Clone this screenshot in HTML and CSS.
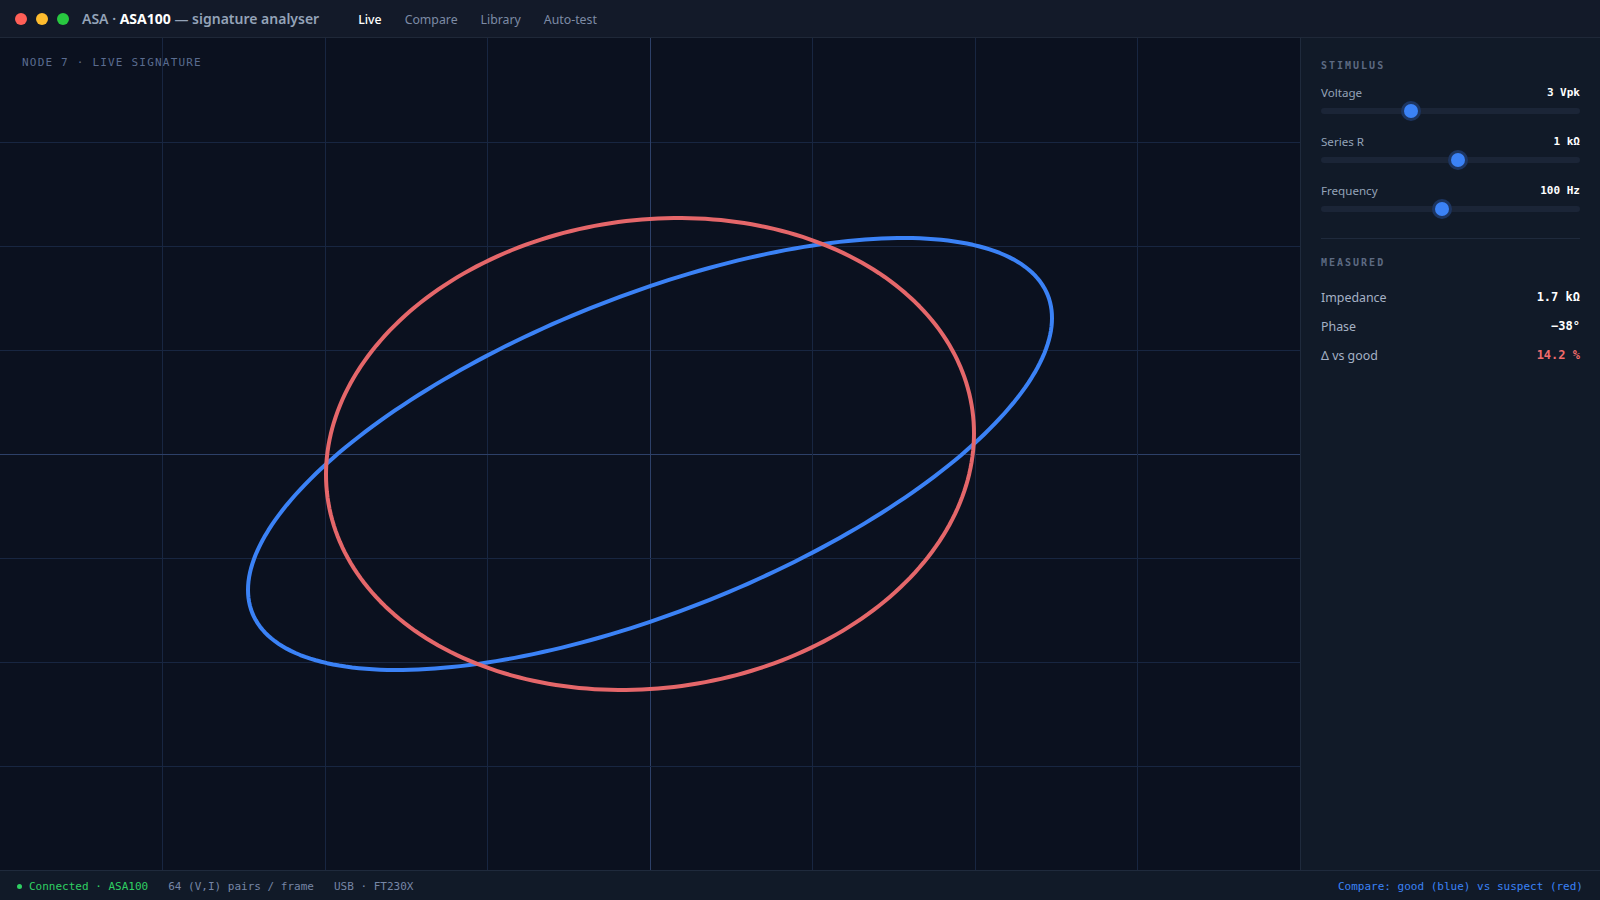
FILE: index.html
```html
<!DOCTYPE html>
<html lang="en">
<head>
  <meta charset="UTF-8">
  <meta name="viewport" content="width=device-width, initial-scale=1.0">
  <title>ASA100 signature analyser</title>
  <link rel="stylesheet" href="styles.css">
</head>
<body>
  <header class="titlebar">
    <div class="lights">
      <span class="light close"></span>
      <span class="light min"></span>
      <span class="light max"></span>
    </div>
    <div class="app-title">ASA · <b>ASA100</b> — signature analyser</div>
    <nav class="tabs">
      <a class="tab active">Live</a>
      <a class="tab">Compare</a>
      <a class="tab">Library</a>
      <a class="tab">Auto-test</a>
    </nav>
  </header>

  <main class="workspace">
    <section class="scope">
      <div class="scope-label">NODE 7 · LIVE SIGNATURE</div>
      <svg id="plot" viewBox="0 0 1300 832" preserveAspectRatio="none">
        <g id="grid" class="grid"></g>
        <path id="trace-good" class="trace good"></path>
        <path id="trace-suspect" class="trace suspect"></path>
      </svg>
    </section>

    <aside class="panel">
      <div class="group stimulus">
        <div class="group-title">STIMULUS</div>
        <div class="control">
          <div class="control-head"><span>Voltage</span><span class="value">3 Vpk</span></div>
          <input type="range" min="0" max="100" value="34">
        </div>
        <div class="control">
          <div class="control-head"><span>Series R</span><span class="value">1 kΩ</span></div>
          <input type="range" min="0" max="100" value="53">
        </div>
        <div class="control">
          <div class="control-head"><span>Frequency</span><span class="value">100 Hz</span></div>
          <input type="range" min="0" max="100" value="46.5" step="0.5">
        </div>
      </div>
      <div class="group measured">
        <div class="group-title">MEASURED</div>
        <div class="reading"><span>Impedance</span><span class="value">1.7 kΩ</span></div>
        <div class="reading"><span>Phase</span><span class="value">−38°</span></div>
        <div class="reading"><span>Δ vs good</span><span class="value bad">14.2 %</span></div>
      </div>
    </aside>
  </main>

  <footer class="statusbar">
    <span class="status ok"><i class="dot"></i>Connected · ASA100</span>
    <span class="status">64 (V,I) pairs / frame</span>
    <span class="status">USB · FT230X</span>
    <span class="status legend">Compare: good (blue) vs suspect (red)</span>
  </footer>

  <script>
    const W = 1300, H = 832;
    const cx = W / 2, cy = H / 2;
    const NS = "http://www.w3.org/2000/svg";

    // 8 x 8 graticule, centre lines brighter
    const grid = document.getElementById("grid");
    for (let i = 1; i < 8; i++) {
      const v = document.createElementNS(NS, "line");
      const x = i * W / 8;
      v.setAttribute("x1", x); v.setAttribute("x2", x);
      v.setAttribute("y1", 0); v.setAttribute("y2", H);
      if (i === 4) v.classList.add("axis");
      grid.appendChild(v);

      const h = document.createElementNS(NS, "line");
      const y = i * H / 8 + 0.5;
      h.setAttribute("x1", 0); h.setAttribute("x2", W);
      h.setAttribute("y1", y); h.setAttribute("y2", y);
      if (i === 4) h.classList.add("axis");
      grid.appendChild(h);
    }

    // V-I signature: x = V, y = I shifted by phase
    function signature(ampV, ampI, phaseDeg, n) {
      const phi = phaseDeg * Math.PI / 180;
      let d = "";
      for (let k = 0; k <= n; k++) {
        const t = k / n * Math.PI * 2;
        const x = cx + ampV * Math.sin(t);
        const y = cy - ampI * Math.sin(t + phi);
        d += (k === 0 ? "M" : "L") + x.toFixed(2) + " " + y.toFixed(2) + " ";
      }
      return d + "Z";
    }

    document.getElementById("trace-good").setAttribute("d", signature(402, 216, 51, 256));
    document.getElementById("trace-suspect").setAttribute("d", signature(324, 236, 85, 256));
  </script>
</body>
</html>
```

FILE: styles.css
```css
* {
  box-sizing: border-box;
}
body {
  margin: 0;
  height: 100vh;
  display: flex;
  flex-direction: column;
  background-color: #0b111e;
  color: #e5e9f0;
  font-family: "Noto Sans", sans-serif;
  overflow: hidden;
}

/* title bar */
.titlebar {
  height: 38px;
  flex: none;
  display: flex;
  align-items: center;
  padding-left: 15px;
  background-color: #131a29;
  border-bottom: 1px solid #1f2838;
}
.lights {
  display: flex;
  gap: 9px;
}
.light {
  width: 12px;
  height: 12px;
  border-radius: 50%;
}
.light.close { background-color: #ff5f57; }
.light.min { background-color: #febc2e; }
.light.max { background-color: #28c840; }
.app-title {
  margin-left: 13px;
  font-size: 14px;
  font-weight: 600;
  color: #94a3b8;
}
.app-title b {
  color: #ffffff;
  font-weight: 700;
}
.tabs {
  display: flex;
  gap: 23px;
  margin-left: 39px;
  padding-top: 2px;
}
.tab {
  font-size: 12.3px;
  color: #7d8ba5;
  cursor: pointer;
}
.tab.active {
  color: #ffffff;
  font-weight: 500;
}

/* main area */
.workspace {
  flex: 1;
  display: grid;
  grid-template-columns: 1fr 300px;
  min-height: 0;
}
.scope {
  position: relative;
  background-color: #0b111f;
}
.scope svg {
  display: block;
  width: 100%;
  height: 100%;
}
.scope-label {
  position: absolute;
  top: 18px;
  left: 22px;
  font-family: "DejaVu Sans Mono", monospace;
  font-size: 11px;
  line-height: 14px;
  letter-spacing: 1.2px;
  color: #5a6c90;
}
.grid line {
  stroke: #182641;
  stroke-width: 1;
  shape-rendering: crispEdges;
}
.grid line.axis {
  stroke: #2d4068;
}
.trace {
  fill: none;
  stroke-width: 4;
  stroke-linejoin: round;
}
.trace.good { stroke: #3b82f6; }
.trace.suspect { stroke: #e5676a; }

/* side panel */
.panel {
  background-color: #111a28;
  border-left: 1px solid #1f2a3c;
  padding: 0 20px;
}
.group-title {
  font-family: "DejaVu Sans Mono", monospace;
  font-size: 10px;
  line-height: 14px;
  letter-spacing: 2px;
  font-weight: 700;
  color: #5d6a82;
}
.stimulus {
  padding: 21px 0 26px;
  border-bottom: 1px solid #1f2a3c;
}
.stimulus .group-title {
  margin-bottom: 11px;
}
.control + .control {
  margin-top: 19px;
}
.control-head {
  display: flex;
  justify-content: space-between;
  align-items: baseline;
  height: 18px;
  line-height: 18px;
  font-size: 11.6px;
  color: #94a3b8;
}
.value {
  font-family: "DejaVu Sans Mono", monospace;
  font-weight: 700;
  font-size: 11px;
  color: #ffffff;
  position: relative;
  top: -1px;
}
.control input[type="range"] {
  -webkit-appearance: none;
  appearance: none;
  display: block;
  width: 100%;
  height: 6px;
  margin: 6px 0 0;
  border-radius: 3px;
  background-color: #1b2537;
  outline: none;
}
.control input[type="range"]::-webkit-slider-thumb {
  -webkit-appearance: none;
  width: 14px;
  height: 14px;
  border-radius: 50%;
  background-color: #3b82f6;
  box-shadow: 0 0 0 3px #1d3560;
  cursor: pointer;
}
.measured {
  padding-top: 17px;
}
.measured .group-title {
  margin-bottom: 13px;
}
.reading {
  display: flex;
  justify-content: space-between;
  align-items: baseline;
  height: 29px;
  line-height: 29px;
  font-size: 12.4px;
  color: #a5b1c5;
}
.reading .value {
  font-size: 12px;
}
.reading .value.bad {
  color: #ef6b6b;
}

/* status bar */
.statusbar {
  height: 30px;
  flex: none;
  display: flex;
  align-items: center;
  gap: 20px;
  padding: 2px 17px 0;
  background-color: #111a28;
  border-top: 1px solid #1f2a3c;
  font-family: "DejaVu Sans Mono", monospace;
  font-size: 11px;
  color: #7686a6;
}
.status.ok {
  color: #2fcf62;
  display: flex;
  align-items: center;
}
.dot {
  width: 5px;
  height: 5px;
  border-radius: 50%;
  background-color: #2fcf62;
  margin-right: 7px;
}
.status.legend {
  margin-left: auto;
  color: #3b82f6;
}
```
